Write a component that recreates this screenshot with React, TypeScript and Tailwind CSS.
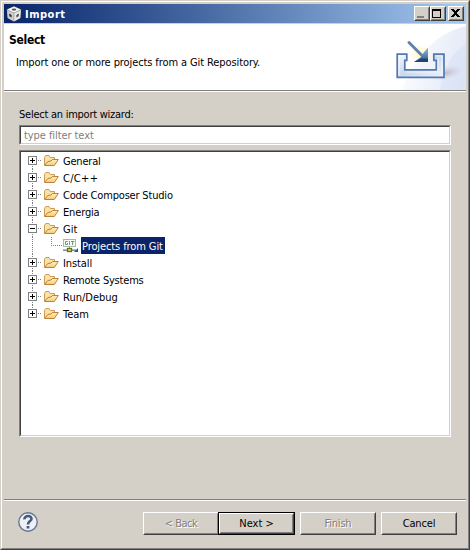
import type { ReactNode } from 'react';

const sunken = 'border border-t-[#808080] border-l-[#808080] border-r-white border-b-white';
const sunkenInner = 'border border-t-[#404040] border-l-[#404040] border-r-[#d4d0c8] border-b-[#d4d0c8] bg-white';
const raised = 'border border-t-white border-l-white border-r-[#404040] border-b-[#404040] bg-[#d4d0c8]';
const raisedInner = 'border border-t-[#d4d0c8] border-l-[#d4d0c8] border-r-[#808080] border-b-[#808080]';

function AppIcon() {
  return (
    <svg width="16" height="16" viewBox="0 0 16 16">
      <path d="M8 .3 15.2 3.5 14.5 12 8 15.7 1.5 12 .8 3.5Z" fill="#8b8b8e" />
      <path d="M8 .6 14.8 3.6 8 6.8 1.2 3.6Z" fill="#f4f4f4" />
      <path d="M1.1 4.3 7.7 7.3V15.3L1.8 11.9Z" fill="#cfcfcf" />
      <path d="M14.9 4.3 8.3 7.3V15.3L14.2 11.9Z" fill="#e9e9e9" />
      <ellipse cx="8" cy="3.6" rx="2.3" ry="1.1" fill="#555" />
      <path d="M3 7.5 5.6 8.9V11.4L3.4 10.2Z" fill="#333" />
      <path d="M13 7.5 10.4 8.9V11.4L12.6 10.2Z" fill="#4a4a4a" />
    </svg>
  );
}

function Folder() {
  return (
    <svg width="16" height="13" viewBox="0 0 16 13" className="ml-[1px] shrink-0">
      <defs>
        <linearGradient id="fold" x1="0" y1="0" x2="0" y2="1">
          <stop offset="0" stopColor="#fff1c0" />
          <stop offset="1" stopColor="#f5cb72" />
        </linearGradient>
      </defs>
      <path d="M1.5 11V3.2L2.8 1.5H6L7.3 3.5H11.5V6" fill="#f9e2a6" stroke="#cf9a55" />
      <path d="M1.5 11.5 4.8 7.5 8 7 9.5 5.5H15.3L11.3 11.5Z" fill="url(#fold)" stroke="#bd8038" strokeLinejoin="round" />
    </svg>
  );
}

function GitIcon() {
  return (
    <svg width="16" height="16" viewBox="0 0 16 16" className="shrink-0">
      <rect x=".5" y="1.5" width="12" height="7" fill="#f6f8f4" stroke="#a9b5b2" />
      <g fill="none" strokeWidth="1">
        <path d="M4.7 3.5H2.5V6.5H4.5V5" stroke="#66a36b" />
        <path d="M6.5 3V7" stroke="#8a9a92" />
        <path d="M8 3.5H11.3M9.6 3.5V7" stroke="#5d9c64" />
      </g>
      <path d="M6.5 9V10.5M0 12.5H13" stroke="#85929d" />
      <path d="M0 11.5H13" stroke="#b9bd98" />
      <rect x="4.5" y="10.5" width="4" height="3" fill="#e8dc62" stroke="#6e6b16" strokeWidth="1.3" />
      <path d="M15 10V14H11Z" fill="#19629b" />
    </svg>
  );
}

function ImportArt() {
  return (
    <svg width="76" height="66" viewBox="0 0 76 66">
      <defs>
        <linearGradient id="sweep" x1="0" y1=".3" x2="1" y2=".6">
          <stop offset="0" stopColor="#fff" />
          <stop offset="1" stopColor="#e1e8f7" />
        </linearGradient>
        <linearGradient id="tray" x1="0" y1="0" x2="1" y2="1">
          <stop offset="0" stopColor="#f4f7fc" />
          <stop offset=".5" stopColor="#cbd9ed" />
          <stop offset="1" stopColor="#eef3fa" />
        </linearGradient>
        <radialGradient id="glow">
          <stop offset="0" stopColor="#fff9bd" />
          <stop offset=".7" stopColor="#fffbe0" />
          <stop offset="1" stopColor="#fff" stopOpacity="0" />
        </radialGradient>
        <radialGradient id="shade">
          <stop offset="0" stopColor="#ad9cab" stopOpacity=".6" />
          <stop offset="1" stopColor="#d6c9d8" stopOpacity="0" />
        </radialGradient>
        <linearGradient id="arrow" x1="0" y1="0" x2="0" y2="1">
          <stop offset="0" stopColor="#9fbad6" />
          <stop offset="1" stopColor="#2a568c" />
        </linearGradient>
      </defs>
      <path d="M76 2C50 8 26 28 12 66H76Z" fill="url(#sweep)" />
      <path d="M76 20C62 28 53 46 50 66H76Z" fill="#d3def4" opacity=".4" />
      <ellipse cx="56" cy="49" rx="18" ry="7" fill="url(#shade)" transform="rotate(-12 56 49)" />
      <circle cx="30" cy="30" r="10" fill="url(#glow)" opacity=".8" />
      <path d="M7.2 30.2H16.8V36.3H14.8V45.8H46.3V36.3H43.8V30.2H54V53.3H7.2Z" fill="url(#tray)" stroke="#5279b2" strokeWidth="1.7" />
      <path d="M9 51.3V32H15M16 48H48V34M46 32H52V51.3" fill="none" stroke="#fff" strokeOpacity=".7" />
      <path d="M19 18.5 31.5 31" stroke="#5f82b0" strokeWidth="3" strokeLinecap="round" />
      <path d="M38 23.5V38H24L30.5 33.5 32.5 30Z" fill="url(#arrow)" />
      <path d="M24 38 31 34.5H38V38Z" fill="#17406f" opacity=".8" />
    </svg>
  );
}

function CaptionButton({ children, className = '' }: { children: ReactNode; className?: string }) {
  return (
    <div className={`h-[15px] w-[16px] ${raised} ${className}`}>
      <div className={`h-full w-full ${raisedInner}`}>
        <svg width="12" height="11" viewBox="0 0 12 11" shapeRendering="crispEdges">{children}</svg>
      </div>
    </div>
  );
}

function Row({ label, open = false, first = false, last = false, spacing = '' }: { label: string; open?: boolean; first?: boolean; last?: boolean; spacing?: string }) {
  return (
    <div className="flex h-[17px] items-center pl-[7px]">
      <svg width="14" height="17" viewBox="0 0 14 17" shapeRendering="crispEdges" className="shrink-0">
        {!first && <path d="M4.5 0V4" stroke="#808080" strokeDasharray="1 1" />}
        {!last && <path d="M4.5 14V17" stroke="#808080" strokeDasharray="1 1" />}
        <path d="M10 8.5H14" stroke="#808080" strokeDasharray="1 1" />
        <rect x=".5" y="4.5" width="8" height="8" fill="#fff" stroke="#808080" />
        <path d={open ? 'M2 8.5H7' : 'M2 8.5H7M4.5 6V11'} stroke="#000" />
      </svg>
      <Folder />
      <span className={`ml-[4px] pt-[2px] ${spacing}`}>{label}</span>
    </div>
  );
}

function Button({ label, disabled = false, focused = false, className = '' }: { label: string; disabled?: boolean; focused?: boolean; className?: string }) {
  return (
    <button className={`h-[23px] shrink-0 ${focused ? 'w-[77px] border border-black' : 'w-[76px]'} ${className}`}>
      <span className={`block h-full w-full ${raised}`}>
        <span className={`flex h-full w-full items-center justify-center whitespace-pre ${raisedInner} ${disabled ? 'text-[#808080] [text-shadow:1px_1px_0_#fff]' : ''}`}>{label}</span>
      </span>
    </button>
  );
}

export default function App() {
  return (
    <div className="h-[550px] w-[470px] cursor-default overflow-hidden border border-t-[#d4d0c8] border-r-[#404040] border-b-[#404040] border-l-[#d4d0c8] bg-[#d4d0c8] font-['DejaVu_Sans_Condensed','DejaVu_Sans',sans-serif] text-[11px] leading-[17px] whitespace-nowrap text-black font-stretch-condensed">
      <div className="flex h-full flex-col border border-t-white border-r-[#808080] border-b-[#808080] border-l-white p-[2px]">
        <header className="flex h-[19px] shrink-0 items-center bg-linear-to-r from-[#0a246a] to-[#a6caf0] pr-[2px] pl-[2px]">
          <AppIcon />
          <h1 className="ml-[3px] pt-[2px] text-[11px] font-bold tracking-[0.5px] text-white">Import</h1>
          <div className="ml-auto flex">
            <CaptionButton><path d="M1 9H8" stroke="#808080" strokeWidth="2" /></CaptionButton>
            <CaptionButton><path d="M0 2H9" stroke="#000" strokeWidth="2" /><path d="M.5 1V9.5H8.5V1" fill="none" stroke="#000" /></CaptionButton>
            <CaptionButton className="ml-[2px]"><path d="M1 1H4V2H5V3H6V2H7V1H10V2H9V3H8V4H7V6H8V7H9V8H10V9H7V8H6V7H5V8H4V9H1V8H2V7H3V6H4V4H3V3H2V2H1Z" fill="#000" /></CaptionButton>
          </div>
        </header>
        <section className="mt-[1px] flex h-[68px] shrink-0 justify-between border-b border-white bg-white">
          <div className="flex h-[67px] grow border-b border-[#808080]">
            <div className="grow pt-[8px] pl-[5px]">
              <h2 className="text-[12px] font-bold tracking-[-0.3px]">Select</h2>
              <p className="mt-[5px] ml-[7px] tracking-[-0.1px]">Import one or more projects from a Git Repository.</p>
            </div>
            <ImportArt />
          </div>
        </section>
        <main className="flex grow flex-col px-[15px] pt-[14px]">
          <label className="tracking-[-0.25px]">Select an import wizard:</label>
          <div className={`mt-[2px] h-[20px] ${sunken}`}>
            <div className={`h-full pl-[3px] leading-[17px] tracking-[-0.07px] text-[#808080] ${sunkenInner}`}>type filter text</div>
          </div>
          <div className={`mt-[5px] h-[287px] ${sunken}`}>
            <div className={`h-full ${sunkenInner}`}>
              <Row label="General" first spacing="tracking-[-0.2px]" />
              <Row label="C/C++" spacing="tracking-[0.3px]" />
              <Row label="Code Composer Studio" spacing="tracking-[-0.18px]" />
              <Row label="Energia" spacing="tracking-[-0.15px]" />
              <Row label="Git" open />
              <div className="flex h-[17px] items-center pl-[7px]">
                <svg width="35" height="17" viewBox="0 0 35 17" shapeRendering="crispEdges" className="shrink-0">
                  <path d="M4.5 0V17M23.5 0V9M23 8.5H35" stroke="#808080" strokeDasharray="1 1" />
                </svg>
                <GitIcon />
                <span className="ml-[2px] h-[17px] w-[84px] bg-[#0a246a] pt-[1px] pl-[1px] tracking-[-0.1px] text-white">Projects from Git</span>
              </div>
              <Row label="Install" spacing="tracking-[-0.1px]" />
              <Row label="Remote Systems" spacing="tracking-[-0.2px]" />
              <Row label="Run/Debug" />
              <Row label="Team" last />
            </div>
          </div>
        </main>
        <footer className="flex h-[47px] shrink-0 border-t border-[#808080]">
          <div className="flex grow border-t border-white pt-[11px] pl-[14px]">
            <svg width="20" height="20" viewBox="0 0 20 20">
              <circle cx="10" cy="10" r="9.2" fill="#eef0f5" stroke="#667892" strokeWidth="1.4" />
              <path d="M6.4 7.4C6.3 2.9 13.7 3.1 13.5 7C13.3 9.2 10 9 10 12.4" fill="none" stroke="#46597f" strokeWidth="2.6" />
              <path d="M8.6 14H11.4V16.5H8.6Z" fill="#46597f" />
            </svg>
            <Button label="< Back" disabled className="ml-[105px] tracking-[-0.5px]" />
            <Button label="Next >" focused className="-ml-[1px]" />
            <Button label="Finish" disabled className="ml-[5px] tracking-[-0.2px]" />
            <Button label="Cancel" className="ml-[5px] tracking-[-0.15px]" />
          </div>
        </footer>
      </div>
    </div>
  );
}
